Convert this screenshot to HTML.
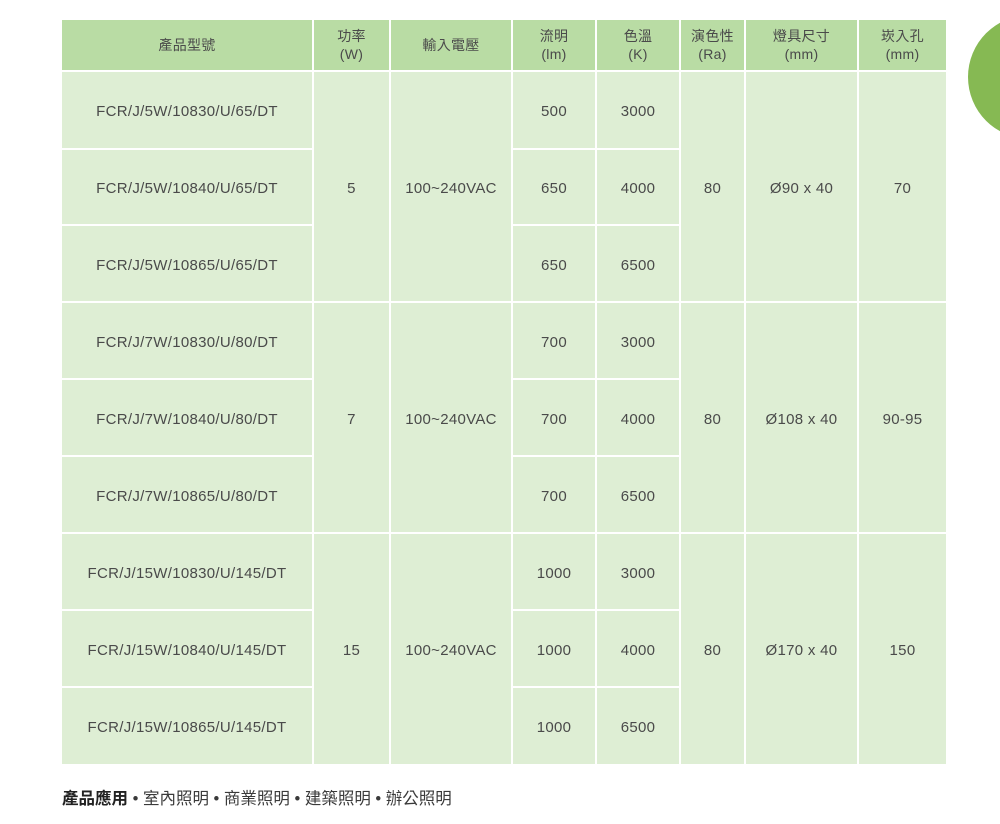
<!DOCTYPE html><html><head><meta charset="utf-8"><style>
body{margin:0;width:1000px;height:824px;background:#fff;position:relative;overflow:hidden;font-family:"Liberation Sans","Noto Sans CJK TC",sans-serif;color:#4a4a4a}
.c{position:absolute;display:flex;align-items:center;justify-content:center;text-align:center;font-size:15px;letter-spacing:0.3px;line-height:18px;box-sizing:border-box}
.h{background:#b9dca4;font-size:14px;letter-spacing:0.3px}
.b{background:#deeed4;padding-top:4px}
.circ{position:absolute;left:968px;top:15px;width:124px;height:124px;border-radius:50%;background:#86b953}
.foot{position:absolute;left:62px;top:785px;font-size:16.5px;font-family:"Liberation Sans","Noto Sans CJK TC",sans-serif;color:#3a3a3a}
</style></head><body>
<div class="circ"></div>
<div id="t"></div>
<div class="foot"><b style="color:#222">產品應用</b> • 室內照明 • 商業照明 • 建築照明 • 辦公照明</div>
<script>
var X=[62,314,391,513,597,681,746,859,948];
var Y=[72,150,226,303,380,457,534,611,688,766];
var t=document.getElementById('t'),s='';
function cell(x0,x1,y0,y1,txt,cls){s+='<div class="c '+cls+'" style="left:'+X[x0]+'px;width:'+(X[x1]-X[x0]-2)+'px;top:'+y0+'px;height:'+(y1-y0-2)+'px">'+txt+'</div>';}
var H=['產品型號','功率<br>(W)','輸入電壓','流明<br>(lm)','色溫<br>(K)','演色性<br>(Ra)','燈具尺寸<br>(mm)','崁入孔<br>(mm)'];
for(var i=0;i<8;i++)cell(i,i+1,20,72,H[i],'h');
var g=[['5W','10830','65','5','Ø90 x 40','70',['500','650','650']],['7W','10830','80','7','Ø108 x 40','90-95',['700','700','700']],['15W','10830','145','15','Ø170 x 40','150',['1000','1000','1000']]];
var K=['3000','4000','6500'],cc=['10830','10840','10865'];
for(var gi=0;gi<3;gi++){var G=g[gi];var ys=Y[gi*3],ye=Y[gi*3+3];
for(var r=0;r<3;r++){var a=Y[gi*3+r],b=Y[gi*3+r+1];
cell(0,1,a,b,'FCR/J/'+G[0]+'/'+cc[r]+'/U/'+G[2]+'/DT','b');
cell(3,4,a,b,G[6][r],'b');cell(4,5,a,b,K[r],'b');}
cell(1,2,ys,ye,G[3],'b');cell(2,3,ys,ye,'100~240VAC','b');cell(5,6,ys,ye,'80','b');cell(6,7,ys,ye,G[4],'b');cell(7,8,ys,ye,G[5],'b');}
t.innerHTML=s;
</script>
</body></html>
